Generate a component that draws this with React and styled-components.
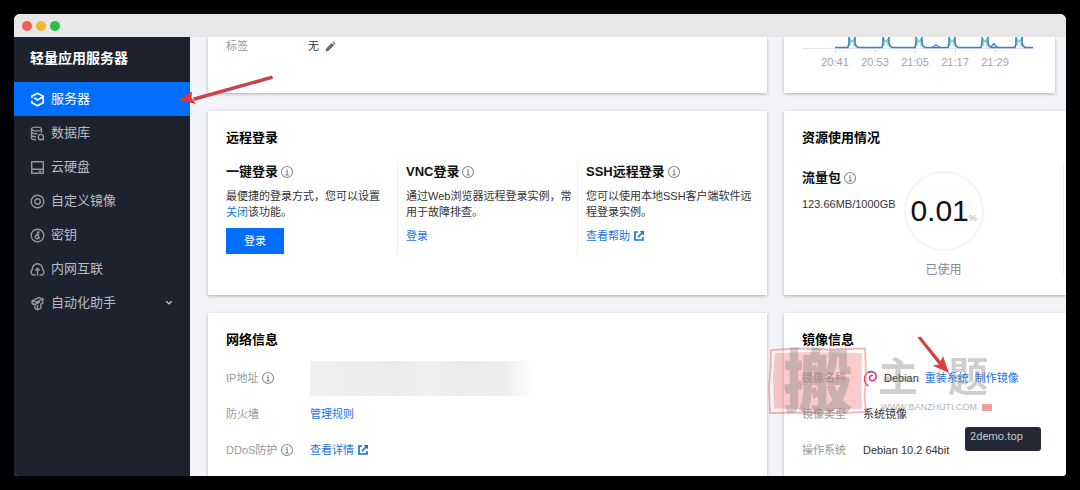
import styled, { createGlobalStyle } from "styled-components";

const GlobalStyle = createGlobalStyle`
  * {
    box-sizing: border-box;
  }
  body {
    margin: 0;
    background: #000;
    font-family: "Liberation Sans", "Noto Sans CJK SC", sans-serif;
    font-size: 11px;
    line-height: 16px;
    color: #333;
  }
  h1, h2, h3, p, dl, dd, ul {
    margin: 0;
    padding: 0;
  }
`;

const Page = styled.div`
  padding: 14px;
`;

const Window = styled.div`
  position: relative;
  display: flex;
  flex-direction: column;
  height: calc(100vh - 28px);
  overflow: hidden;
  border-radius: 6px 6px 4px 4px;
  background: #f3f4f8;
`;

const TitleBar = styled.div`
  display: flex;
  align-items: center;
  gap: 4px;
  flex: none;
  height: 23px;
  padding: 0 8px;
  background: #e7e7e7;
`;

const Dot = styled.span`
  width: 10px;
  height: 10px;
  border-radius: 50%;
  background: ${(props) => props.$color};
`;

const Body = styled.div`
  display: flex;
  flex: 1;
  min-height: 0;
`;

/* Sidebar */

const Sidebar = styled.aside`
  flex: none;
  width: 176px;
  background: #1e222e;
`;

const SidebarTitle = styled.h1`
  padding: 11px 16px 14px;
  font-size: 14px;
  line-height: 20px;
  font-weight: 700;
  color: #fff;
`;

const Menu = styled.ul`
  list-style: none;
`;

const MenuLink = styled.a`
  display: flex;
  align-items: center;
  gap: 6px;
  height: 34px;
  padding: 0 17px 0 16px;
  font-size: 13px;
  line-height: 18px;
  text-decoration: none;
  color: ${(props) => (props.$active ? "#fff" : "#b9bcc4")};
  background: ${(props) => (props.$active ? "#006eff" : "transparent")};

  svg {
    flex: none;
    color: ${(props) => (props.$active ? "#fff" : "#92969f")};
  }
`;

const MenuText = styled.span`
  flex: 1;
`;

/* Content */

const Content = styled.main`
  flex: 1;
  min-width: 0;
  display: grid;
  grid-template-columns: minmax(0, 1fr) 282px;
  grid-template-rows: 56px 184px 1fr;
  gap: 18px 17px;
  padding-left: 18px;
`;

const Card = styled.section`
  padding: 18px 10px 0 18px;
  background: #fff;
  box-shadow: 0 1px 3px rgba(40, 44, 60, 0.36);
`;

const ScrolledCard = styled(Card)`
  padding-top: 0;
  clip-path: inset(0 -4px -6px -4px);
`;

const ChartCard = styled(ScrolledCard)`
  margin-right: 11px;
`;

const CardTitle = styled.h2`
  font-size: 13px;
  line-height: 18px;
  font-weight: 700;
  color: #000;
`;

const SubTitle = styled.h3`
  display: flex;
  align-items: center;
  gap: 2px;
  font-size: 13px;
  line-height: 18px;
  font-weight: 700;
  color: #111;
`;

const Link = styled.a`
  display: inline-flex;
  align-items: center;
  gap: 4px;
  color: #1a73e0;
  text-decoration: none;
`;

const LoginGrid = styled.div`
  display: grid;
  grid-template-columns: 19fr 20fr 20fr;
  margin-top: 16px;
`;

const LoginItem = styled.div`
  display: flex;
  flex-direction: column;
  align-items: flex-start;
  padding-left: ${(props) => (props.$first ? "0" : "8px")};
  border-left: ${(props) => (props.$first ? "none" : "1px solid #eef0f3")};
`;

const LoginText = styled.p`
  margin: 7px 0 8px;
  padding-right: ${(props) => (props.$narrow ? "12px" : "0")};
`;

const PrimaryButton = styled.button`
  height: 26px;
  padding: 0 18px;
  border: 0;
  background: #006eff;
  color: #fff;
  font: inherit;
`;

/* Label and value rows */

const InfoList = styled.dl`
  margin-top: ${(props) => (props.$flush ? "0" : "11px")};
`;

const InfoRow = styled.div`
  display: flex;
  align-items: center;
  height: ${(props) => props.$height}px;
`;

const InfoLabel = styled.dt`
  display: flex;
  align-items: center;
  gap: 3px;
  flex: none;
  width: ${(props) => props.$width}px;
  color: #999;
`;

const InfoValue = styled.dd`
  display: flex;
  align-items: center;
  gap: 6px;
`;

const HiddenValue = styled.span`
  width: 222px;
  height: 35px;
  background: linear-gradient(90deg, #f0f0f1, #ececed 40%, #f1f1f2 52%, #ececed 66%, #eeeeef 88%, #fff);
`;

/* Usage */

const Usage = styled.div`
  display: flex;
  align-items: flex-start;
  gap: 8px;
  height: 112px;
  margin-top: 16px;
  margin-right: -8px;
  padding-top: 6px;
  border-right: 1px solid #f1f2f5;
`;

const UsageAmount = styled.p`
  margin-top: 9px;
`;

const Gauge = styled.div`
  display: flex;
  flex-direction: column;
  align-items: center;
  gap: 11px;
  padding-top: 2px;
  font-size: 12px;
  color: #888;
`;

const Ring = styled.div`
  display: flex;
  align-items: baseline;
  justify-content: center;
  width: 80px;
  height: 80px;
  border: 2px solid #f4f5f8;
  border-radius: 50%;
  font-size: 9px;
  line-height: 76px;
  color: #aaa;
`;

const RingValue = styled.span`
  font-size: 30px;
  color: #111;
`;

/* Items lying over the window */

const Overlay = styled.svg`
  position: absolute;
  top: ${(props) => props.$top}px;
  ${(props) => props.$side}: ${(props) => props.$offset}px;
  pointer-events: none;
`;

const Watermark = styled.div`
  position: absolute;
  right: 70px;
  top: 333px;
  display: flex;
  gap: 6px;
  pointer-events: none;
  color: rgba(135, 135, 135, 0.42);
`;

const Seal = styled.div`
  position: relative;
  width: 100px;
  height: 68px;
  font-size: 70px;
  line-height: 74px;
  font-weight: 900;
  text-align: center;

  svg {
    position: absolute;
    inset: 0;
  }
  span {
    position: relative;
  }
`;

const Brand = styled.div`
  width: 122px;
  padding-top: 7px;
`;

const BrandName = styled.div`
  display: flex;
  justify-content: space-between;
  padding: 0 8px 0 4px;
  font-size: 40px;
  line-height: 46px;
  font-weight: 700;
`;

const BrandSite = styled.div`
  display: flex;
  align-items: center;
  gap: 5px;
  padding-left: 7px;
  font-size: 9px;
  line-height: 14px;
  color: rgba(120, 120, 120, 0.6);
`;

const BrandFlag = styled.span`
  width: 10px;
  height: 7px;
  background: rgba(232, 60, 60, 0.5);
`;

const Tip = styled.div`
  position: absolute;
  right: 25px;
  top: 413px;
  width: 76px;
  height: 24px;
  padding: 2px 5px;
  border-radius: 3px;
  background: #252936;
  color: #c3c6cd;
  font-family: Roboto, sans-serif;
`;

/* Icons */

const MenuSvg = ({ children }) => (
  <svg width="15" height="15" viewBox="0 0 15 15" fill="none" stroke="currentColor" strokeWidth="1.4">
    {children}
  </svg>
);

const icons = {
  server: (
    <MenuSvg>
      <path d="M1.800 6V4.300L7.500 1.200l5.700 3.100v6.400l-5.700 3.100-5.700-3.100V8.800" strokeWidth="1.700" />
      <path d="M4.200 5.800 7.500 8l5.600-3.300" strokeWidth="1.900" />
    </MenuSvg>
  ),
  database: (
    <MenuSvg>
      <ellipse cx="6.500" cy="3" rx="5" ry="1.900" />
      <path d="M1.500 3v9c0 1 2 1.800 4.800 1.800M11.500 3v4M1.500 6.200c.6 1.300 3 1.700 5.800 1.500M1.500 9.300c.5 1 2.300 1.500 4.500 1.500" />
      <circle cx="10.900" cy="11" r="2.600" />
      <path d="M8.500 13.600h5.500" />
    </MenuSvg>
  ),
  disk: (
    <MenuSvg>
      <path d="M1.700 1.700h11.600v11.600H1.700zM1.700 9.300h11.600M8.800 11.400h2.700" />
    </MenuSvg>
  ),
  image: (
    <MenuSvg>
      <circle cx="7.500" cy="7.500" r="6.300" />
      <circle cx="7.500" cy="7.500" r="2.800" />
    </MenuSvg>
  ),
  key: (
    <MenuSvg>
      <circle cx="7.500" cy="7.500" r="6.300" />
      <circle cx="6.900" cy="9" r="1.700" />
      <path d="M7.400 7.500V3.500M7.400 4.300h2.200M7.400 6.200h1.800M9 8.500v2.800" />
    </MenuSvg>
  ),
  network: (
    <MenuSvg>
      <path d="M5.600 13H4a2.900 2.900 0 0 1-1.700-5.300C2.200 4.500 4.300 1.700 7.500 1.700s5.300 2.800 5.200 6A2.900 2.900 0 0 1 11 13H9.600" />
      <path d="M7.500 13.700V6.300M5.300 8.500l2.200-2.300 2.200 2.300" />
    </MenuSvg>
  ),
  assistant: (
    <MenuSvg>
      <path d="M2.200 4.800 8.800 1.600l4 1.300-6.200 3.300zM2.200 4.800v2.900l2.200 1V7.200M12.800 2.900v4.300l-2 1v4l-3.200 1.800-2.600-1.600V8.600l5-2.700M7.600 9v4.600" />
    </MenuSvg>
  ),
};

const ChevronIcon = () => (
  <svg width="8" height="6" viewBox="0 0 8 6" fill="none" stroke="#c5c8cf" strokeWidth="1.4">
    <path d="M1.300 1.300 4 3.900l2.700-2.600" />
  </svg>
);

const InfoIcon = () => (
  <svg width="14" height="14" viewBox="-.5 -.5 14 14" fill="none" stroke="#858a94" strokeWidth="1.1">
    <circle cx="6.500" cy="6.500" r="5.500" />
    <path d="M5.300 5.600h1.400v3.700M5 9.400h3.200M6.500 3.200v1.300" />
  </svg>
);

const ExternalIcon = () => (
  <svg width="10" height="10" viewBox="0 0 10 10" fill="none" stroke="#1a73e0" strokeWidth="1.7">
    <path d="M4 1H1v8h8V6" />
    <path d="M4 6.200 8.200 1.800" />
    <path d="M5.600 0H10v4.400z" fill="#1a73e0" stroke="none" />
  </svg>
);

const PencilIcon = () => (
  <svg width="11" height="11" viewBox="0 0 11 11" fill="#666">
    <path d="M.5 10.500l.8-3L6.800 2l2.200 2.200-5.500 5.500zM7.500 1.300l.9-.8 2.200 2.200-.9.8z" />
  </svg>
);

const DebianIcon = () => (
  <svg width="15" height="17" viewBox="0 0 15 17" fill="none" stroke="#cc3a70" strokeLinecap="round">
    <path d="M5 15.800C2.200 13.500 1 10.500 1.500 7.500 2.100 3.700 5 1.500 8.200 1.600" strokeWidth="1.200" />
    <path d="M5.500 2.400C9 .4 13 2.500 13.300 6c.2 3-2.300 5-4.600 4.700C6.700 10.400 6 8.500 6.700 7c.5-1.100 1.500-1.600 2.500-1.500" strokeWidth="1.600" />
  </svg>
);

const peaks = [50, 84, 117, 150, 183, 217];
const times = ["20:41", "20:53", "21:05", "21:17", "21:29"];

const UsageChart = () => (
  <svg width="234" height="34" viewBox="0 0 234 34" fill="none">
    <path d="M1 11.500h230" stroke="#e2e3e6" />
    {peaks.map((x) => (
      <path key={x} d={`M${x - 2} 9V2L${x} 5L${x + 2} 2V9`} stroke="#63c9bd" strokeWidth="1.2" />
    ))}
    <path
      d={peaks
        .map((x, i) => `M${i ? peaks[i - 1] + 6 : 33} 10.500 H${x - 4} L${x - 3} 6 V-2 M${x + 3} -2 V6 L${x + 4} 9 L${x + 6} 10.500`)
        .join(" ")
        .concat(" H231")}
      stroke="#3b7fca"
      strokeWidth="1.6"
    />
    <path d="M130 10.500l4-2.500 4 2.500M189 10l3-3.500 3 4" stroke="#3b7fca" strokeWidth="1.4" />
    {times.map((time, i) => (
      <g key={time}>
        <path d={`M${33.5 + i * 40} 11v5`} stroke="#dcdde0" />
        <text x={33 + i * 40} y="29" textAnchor="middle" fontSize="11" fill="#a3a5ab">
          {time}
        </text>
      </g>
    ))}
  </svg>
);

const menu = [
  { icon: "server", text: "服务器", active: true },
  { icon: "database", text: "数据库" },
  { icon: "disk", text: "云硬盘" },
  { icon: "image", text: "自定义镜像" },
  { icon: "key", text: "密钥" },
  { icon: "network", text: "内网互联" },
  { icon: "assistant", text: "自动化助手", more: true },
];

const Info = ({ label, hint, width, height = 36, children }) => (
  <InfoRow $height={height}>
    <InfoLabel $width={width}>
      {label}
      {hint && <InfoIcon />}
    </InfoLabel>
    <InfoValue>{children}</InfoValue>
  </InfoRow>
);

export default function App() {
  return (
    <Page>
      <GlobalStyle />
      <Window>
        <TitleBar>
          <Dot $color="#ee5f57" />
          <Dot $color="#f5b32e" />
          <Dot $color="#2bc03f" />
        </TitleBar>
        <Body>
          <Sidebar>
            <SidebarTitle>轻量应用服务器</SidebarTitle>
            <Menu>
              {menu.map((item) => (
                <li key={item.text}>
                  <MenuLink href="#" $active={item.active}>
                    {icons[item.icon]}
                    <MenuText>{item.text}</MenuText>
                    {item.more && <ChevronIcon />}
                  </MenuLink>
                </li>
              ))}
            </Menu>
          </Sidebar>

          <Content>
            <ScrolledCard>
              <InfoList $flush>
                <Info label="标签" width={82} height={18}>
                  无
                  <PencilIcon />
                </Info>
              </InfoList>
            </ScrolledCard>
            <ChartCard>
              <UsageChart />
            </ChartCard>

            <Card>
              <CardTitle>远程登录</CardTitle>
              <LoginGrid>
                <LoginItem $first>
                  <SubTitle>
                    一键登录 <InfoIcon />
                  </SubTitle>
                  <LoginText $narrow>
                    最便捷的登录方式，您可以设置<Link href="#">关闭</Link>该功能。
                  </LoginText>
                  <PrimaryButton type="button">登录</PrimaryButton>
                </LoginItem>
                <LoginItem>
                  <SubTitle>
                    VNC登录 <InfoIcon />
                  </SubTitle>
                  <LoginText>通过Web浏览器远程登录实例，常用于故障排查。</LoginText>
                  <Link href="#">登录</Link>
                </LoginItem>
                <LoginItem>
                  <SubTitle>
                    SSH远程登录 <InfoIcon />
                  </SubTitle>
                  <LoginText>您可以使用本地SSH客户端软件远程登录实例。</LoginText>
                  <Link href="#">
                    查看帮助 <ExternalIcon />
                  </Link>
                </LoginItem>
              </LoginGrid>
            </Card>
            <Card>
              <CardTitle>资源使用情况</CardTitle>
              <Usage>
                <div>
                  <SubTitle>
                    流量包 <InfoIcon />
                  </SubTitle>
                  <UsageAmount>123.66MB/1000GB</UsageAmount>
                </div>
                <Gauge>
                  <Ring>
                    <RingValue>0.01</RingValue>%
                  </Ring>
                  已使用
                </Gauge>
              </Usage>
            </Card>

            <Card>
              <CardTitle>网络信息</CardTitle>
              <InfoList>
                <Info label="IP地址" hint width={84}>
                  <HiddenValue />
                </Info>
                <Info label="防火墙" width={84}>
                  <Link href="#">管理规则</Link>
                </Info>
                <Info label="DDoS防护" hint width={84}>
                  <Link href="#">
                    查看详情 <ExternalIcon />
                  </Link>
                </Info>
              </InfoList>
            </Card>
            <Card>
              <CardTitle>镜像信息</CardTitle>
              <InfoList>
                <Info label="镜像名称" width={61}>
                  <DebianIcon />
                  Debian
                  <Link href="#">重装系统</Link>
                  <Link href="#">制作镜像</Link>
                </Info>
                <Info label="镜像类型" width={61}>
                  系统镜像
                </Info>
                <Info label="操作系统" width={61}>
                  Debian 10.2 64bit
                </Info>
              </InfoList>
            </Card>
          </Content>
        </Body>

        <Watermark>
          <Seal>
            <svg width="100" height="68" viewBox="0 0 100 68" fill="none">
              <path
                d="M3 3 30 1.500 60 2.500 97 1.500 98 30 96.500 50 98 65 60 66.500 30 65.500 2 66 1 40 2.500 20z"
                stroke="rgba(238, 92, 92, 0.45)"
                strokeWidth="1.8"
              />
              <path
                d="M7 6 40 5 94 6 93.500 34 94 62 50 63 6 61.500 5 30z"
                fill="rgba(244, 110, 110, 0.36)"
              />
            </svg>
            <span>搬</span>
          </Seal>
          <Brand>
            <BrandName>
              <span>主</span>
              <span>题</span>
            </BrandName>
            <BrandSite>
              WWW.BANZHUTI.COM
              <BrandFlag />
            </BrandSite>
          </Brand>
        </Watermark>

        <Tip>2demo.top</Tip>

        <Overlay width="100" height="34" $side="left" $offset={162} $top={60}>
          <path d="M96 1.500 97 4.800 18 27 17 23.500z" fill="#c9434a" />
          <path d="M3 26 16 17.500 15.500 24 20 30z" fill="#e0363c" />
        </Overlay>
        <Overlay width="40" height="44" $side="right" $offset={112} $top={320}>
          <path d="M3.500 3.500 6.500 2.500 29 30 26 32z" fill="#cf4544" />
          <path d="M35 39 18.500 31.500 25 30.500 29 22z" fill="#e0403c" />
        </Overlay>
      </Window>
    </Page>
  );
}
